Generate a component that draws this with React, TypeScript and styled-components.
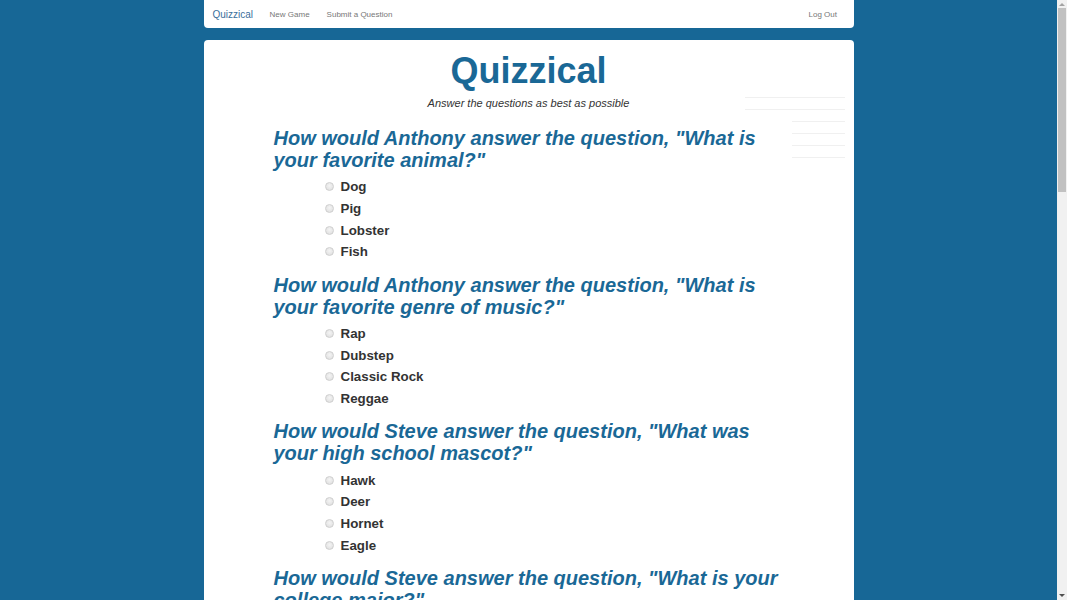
import React from "react";
import styled, { createGlobalStyle } from "styled-components";

const Global = createGlobalStyle`
  html, body { margin: 0; padding: 0; height: 100%; overflow: hidden; }
  body {
    background: #176796;
    font-family: "Liberation Sans", Arial, sans-serif;
    color: #333;
  }
`;

const Shell = styled.div`
  height: 100vh;
  display: grid;
  grid-template-columns: 1fr 10px;
`;

const Scroller = styled.div`
  height: 100vh;
  overflow-y: auto;
  scrollbar-width: none;
  background: #176796;
  &::-webkit-scrollbar { display: none; }
`;

const Track = styled.div`
  background: #f1f1f1;
  display: flex;
  flex-direction: column;
  align-items: center;
`;

const Arrow = styled.div<{ $down?: boolean }>`
  width: 0;
  height: 0;
  margin: 3px 0;
  border-left: 3px solid transparent;
  border-right: 3px solid transparent;
  ${(p) => (p.$down ? "border-top: 3px solid #505050;" : "border-bottom: 3px solid #a3a3a3;")}
`;

const Thumb = styled.div`
  width: 8px;
  height: 184px;
  margin-top: -1px;
  background: #c1c1c1;
`;

const Spacer = styled.div`
  flex: 1;
`;

const Navbar = styled.nav`
  width: 650px;
  height: 28px;
  margin: 0 auto;
  background: #fff;
  border-radius: 0 0 4px 4px;
  display: flex;
  align-items: center;
  padding: 0 8px 0 0;
  box-sizing: border-box;
`;

const Brand = styled.a`
  font-size: 10px;
  color: #3b6f9c;
  padding: 0 8px 0 9px;
  text-decoration: none;
`;

const NavLink = styled.a<{ $push?: boolean }>`
  font-size: 8px;
  color: #777;
  padding: 0 8.5px;
  text-decoration: none;
  margin-left: ${(p) => (p.$push ? "auto" : "0")};
`;

const Panel = styled.main`
  position: relative;
  width: 650px;
  margin: 12px auto 0;
  background: #fff;
  border-radius: 4px;
  padding: 11px 70px 30px;
  box-sizing: border-box;
`;

const Title = styled.h1`
  margin: 0;
  font-size: 36px;
  line-height: 40px;
  font-weight: bold;
  text-align: center;
  color: #1a6896;
`;

const Subtitle = styled.p`
  margin: 4px 0 0;
  font-size: 11px;
  line-height: 16px;
  font-style: italic;
  text-align: center;
  color: #333;
`;

const Aside = styled.div`
  position: absolute;
  top: 46px;
  left: 541px;
  width: 100px;
  display: flex;
  flex-direction: column;
  align-items: flex-end;
`;

const Rule = styled.div<{ $w: number }>`
  width: ${(p) => p.$w}px;
  height: 12px;
  border-bottom: 1px solid #f0f0f0;
  box-sizing: border-box;
`;

const Questions = styled.div`
  margin-top: 16px;
  display: flex;
  flex-direction: column;
  gap: 11px;
`;

const Question = styled.section``;

const Prompt = styled.h2`
  margin: 0;
  font-size: 20px;
  line-height: 22px;
  font-weight: bold;
  font-style: italic;
  color: #1a6896;
`;

const Answers = styled.ul`
  list-style: none;
  margin: 5px 0 0;
  padding: 0 0 0 51px;
`;

const Answer = styled.li`
  display: flex;
  align-items: center;
  height: 21.67px;
  font-size: 13.33px;
  font-weight: bold;
  color: #333;
`;

const Radio = styled.span`
  width: 7px;
  height: 7px;
  border-radius: 50%;
  border: 1px solid #cfcfcf;
  background: radial-gradient(circle at 50% 40%, #f4f4f4, #dcdcdc);
  margin-right: 7px;
  flex: none;
`;

const data: { q: string; a: string[] }[] = [
  { q: 'How would Anthony answer the question, "What is your favorite animal?"', a: ["Dog", "Pig", "Lobster", "Fish"] },
  { q: 'How would Anthony answer the question, "What is your favorite genre of music?"', a: ["Rap", "Dubstep", "Classic Rock", "Reggae"] },
  { q: 'How would Steve answer the question, "What was your high school mascot?"', a: ["Hawk", "Deer", "Hornet", "Eagle"] },
  { q: 'How would Steve answer the question, "What is your college major?"', a: ["Biology", "History", "Computer Science", "Art"] },
  { q: 'How would Anthony answer the question, "What is your favorite food?"', a: ["Pizza", "Tacos", "Sushi", "Burgers"] },
  { q: 'How would Steve answer the question, "What is your favorite sport?"', a: ["Soccer", "Basketball", "Hockey", "Tennis"] },
  { q: 'How would Anthony answer the question, "Where would you most like to travel?"', a: ["Japan", "Italy", "Brazil", "Iceland"] },
  { q: 'How would Steve answer the question, "What is your favorite movie genre?"', a: ["Comedy", "Horror", "Action", "Drama"] },
  { q: 'How would Anthony answer the question, "What is your favorite season?"', a: ["Spring", "Summer", "Fall", "Winter"] },
  { q: 'How would Steve answer the question, "What is your favorite color?"', a: ["Red", "Blue", "Green", "Yellow"] },
  { q: 'How would Anthony answer the question, "What was your first car?"', a: ["Honda", "Ford", "Toyota", "Chevy"] },
];

export default function App() {
  return (
    <Shell>
      <Global />
      <Scroller>
        <Navbar>
          <Brand href="#">Quizzical</Brand>
          <NavLink href="#">New Game</NavLink>
          <NavLink href="#">Submit a Question</NavLink>
          <NavLink href="#" $push>Log Out</NavLink>
        </Navbar>
        <Panel>
          <Aside>
            <Rule $w={100} />
            <Rule $w={100} />
            <Rule $w={53} />
            <Rule $w={53} />
            <Rule $w={53} />
            <Rule $w={53} />
          </Aside>
          <Title>Quizzical</Title>
          <Subtitle>Answer the questions as best as possible</Subtitle>
          <Questions>
            {data.map((item, i) => (
              <Question key={i}>
                <Prompt>{item.q}</Prompt>
                <Answers>
                  {item.a.map((ans) => (
                    <Answer key={ans}>
                      <Radio />
                      {ans}
                    </Answer>
                  ))}
                </Answers>
              </Question>
            ))}
          </Questions>
        </Panel>
      </Scroller>
      <Track>
        <Arrow />
        <Thumb />
        <Spacer />
        <Arrow $down />
      </Track>
    </Shell>
  );
}
